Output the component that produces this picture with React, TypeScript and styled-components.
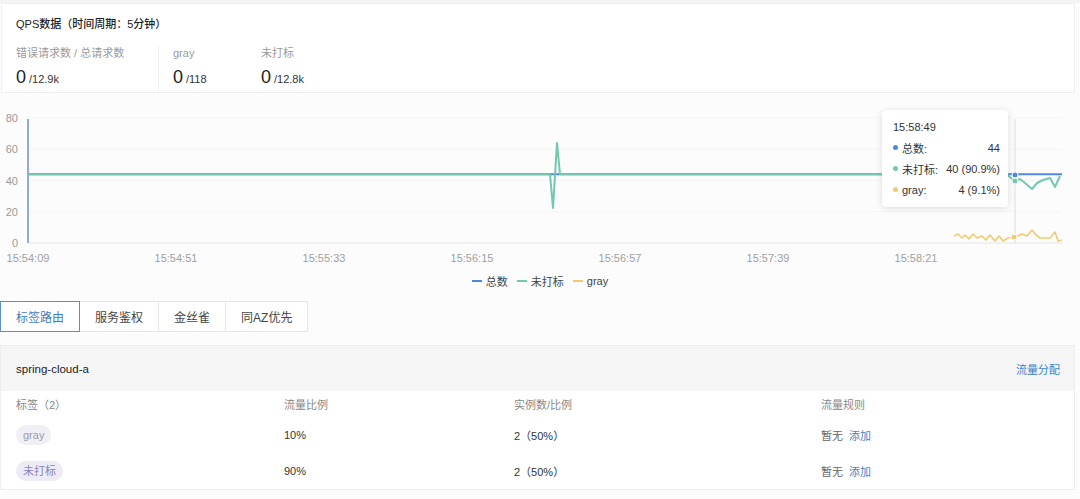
import React from "react";
import styled, { createGlobalStyle } from "styled-components";

const Global = createGlobalStyle`
  html, body { margin: 0; padding: 0; background: #fcfcfd; }
  body { font-family: "Liberation Sans", "Noto Sans CJK SC", sans-serif; color: #333; }
  * { box-sizing: border-box; }
`;

const Page = styled.div`
  width: 1080px;
  height: 499px;
  display: flex;
  flex-direction: column;
  overflow: hidden;
  border-top: 3px solid #f4f4f5;
`;

const Card = styled.section`
  margin-left: 1px;
  width: 1074px;
  height: 90px;
  background: #fff;
  border: 1px solid #efeff1;
  display: flex;
  flex-direction: column;
  padding: 13px 0 0 0;
`;

const Title = styled.div`
  font-size: 11px;
  font-weight: 500;
  color: #222;
  padding-left: 14px;
  line-height: 14px;
`;

const Stats = styled.div`
  display: flex;
  margin-top: 15px;
  flex: 1;
`;

const Stat = styled.div<{ $w?: number; $divider?: boolean }>`
  width: ${(p) => (p.$w ? `${p.$w}px` : "auto")};
  padding-left: 14px;
  border-right: ${(p) => (p.$divider ? "1px solid #f0f0f2" : "none")};
  display: flex;
  flex-direction: column;
`;

const StatLabel = styled.div`
  font-size: 11px;
  color: #9a9a9a;
  line-height: 14px;
`;

const StatValue = styled.div`
  margin-top: 7px;
  display: flex;
  align-items: baseline;
  font-size: 18px;
  color: #222;
  line-height: 20px;
  small {
    font-size: 11px;
    margin-left: 3px;
    color: #333;
  }
`;

const ChartWrap = styled.div`
  position: relative;
  height: 168px;
  margin-top: 7px;
`;

const ChartSvg = styled.svg`
  display: block;
  width: 1080px;
  height: 168px;
`;

const Tooltip = styled.div`
  position: absolute;
  left: 882px;
  top: 10px;
  width: 126px;
  height: 97px;
  background: #fff;
  border-radius: 4px;
  box-shadow: 0 1px 7px rgba(0, 0, 0, 0.13);
  padding: 10px 8px 0 11px;
  font-size: 11px;
  color: #333;
`;

const TipTime = styled.div`
  line-height: 14px;
  margin-bottom: 3px;
`;

const TipRow = styled.div`
  display: flex;
  align-items: center;
  height: 21px;
  span:last-child {
    margin-left: auto;
  }
`;

const Dot = styled.i<{ $c: string }>`
  width: 5px;
  height: 5px;
  border-radius: 50%;
  background: ${(p) => p.$c};
  margin-right: 4px;
  display: inline-block;
`;

const Legend = styled.div`
  display: flex;
  justify-content: center;
  gap: 9px;
  height: 26px;
  align-items: center;
  font-size: 11px;
  color: #444;
`;

const LegendItem = styled.div<{ $c: string }>`
  display: flex;
  align-items: center;
  &::before {
    content: "";
    width: 10px;
    height: 2px;
    background: ${(p) => p.$c};
    margin-right: 4px;
  }
`;

const Tabs = styled.div`
  display: flex;
  margin-top: 7px;
  height: 31px;
`;

const Tab = styled.div<{ $active?: boolean }>`
  padding: 0 15px;
  display: flex;
  align-items: center;
  font-size: 12px;
  color: ${(p) => (p.$active ? "#3f7cc0" : "#444")};
  background: #fff;
  border: 1px solid ${(p) => (p.$active ? "#5d8fc9" : "#e6e6e8")};
  margin-left: -1px;
  position: relative;
  z-index: ${(p) => (p.$active ? 1 : 0)};
  &:first-child { margin-left: 0; }
`;

const Table = styled.section`
  margin-top: 13px;
  width: 1075px;
  background: #fff;
  border: 1px solid #eeeef0;
  display: flex;
  flex-direction: column;
`;

const TableHead = styled.div`
  height: 45px;
  background: #f5f5f6;
  display: flex;
  align-items: center;
  justify-content: space-between;
  padding: 0 14px 0 15px;
  font-size: 11.5px;
  color: #222;
`;

const Link = styled.span`
  color: #3f7fc6;
  font-size: 11px;
`;

const Row = styled.div<{ $h: number; $head?: boolean }>`
  display: grid;
  grid-template-columns: 268px 230px 307px 1fr;
  align-items: center;
  height: ${(p) => p.$h}px;
  padding-left: 15px;
  font-size: 11px;
  color: ${(p) => (p.$head ? "#888" : "#333")};
`;

const Pill = styled.span<{ $purple?: boolean }>`
  justify-self: start;
  height: 20px;
  line-height: 20px;
  padding: 0 7px;
  border-radius: 10px;
  background: ${(p) => (p.$purple ? "#ecebf6" : "#f0f0f4")};
  color: ${(p) => (p.$purple ? "#8a84b6" : "#9a9aa2")};
`;

const Rule = styled.span`
  display: flex;
  gap: 6px;
  color: #666;
`;

const BLUE = "#4f88e0";
const GREEN = "#72c8b0";
const YELLOW = "#f1cb6e";

const yOf = (v: number) => 143 - v * 1.5625;

const greenPath =
  `M28,${yOf(44)} H550 L553,108 L557,43 L560,${yOf(44)} H1004 L1008,75.5 L1011,78 L1015,81 L1020,79 L1025,83 L1032,89 L1037,83 L1043,80 L1050,78 L1055,87 L1060,76`;

const yellowPts = [
  [954, 136], [958, 134], [962, 138], [965, 135], [969, 139], [973, 134], [977, 138], [982, 136],
  [986, 140], [990, 135], [995, 141], [999, 136], [1003, 141], [1008, 138], [1014, 137], [1018, 136],
  [1022, 134], [1027, 136], [1032, 130], [1036, 135], [1040, 138], [1047, 138], [1050, 138],
  [1055, 132], [1058, 141], [1062, 140],
];

const xLabels = ["15:54:09", "15:54:51", "15:55:33", "15:56:15", "15:56:57", "15:57:39", "15:58:21"];
const yLabels = [80, 60, 40, 20, 0];

function Chart() {
  return (
    <ChartWrap>
      <ChartSvg viewBox="0 0 1080 168">
        {yLabels.map((v) => (
          <g key={v}>
            <line x1={28} x2={1062} y1={yOf(v)} y2={yOf(v)} stroke={v === 0 ? "#e6e6e8" : "#f5f5f6"} strokeWidth={1} />
            <text x={18} y={yOf(v) + 4} textAnchor="end" fontSize={11} fill="#9a9a9a" fontFamily="Liberation Sans, sans-serif">
              {v}
            </text>
          </g>
        ))}
        {xLabels.map((t, i) => (
          <text key={t} x={28 + i * 148} y={162} textAnchor="middle" fontSize={11} fill="#a0a0a0" fontFamily="Liberation Sans, sans-serif">
            {t}
          </text>
        ))}
        <line x1={28} x2={28} y1={19} y2={143} stroke="#6f93c4" strokeWidth={1.5} />
        <line x1={1015} x2={1015} y1={19} y2={143} stroke="#dcdcdc" strokeWidth={1} />
        <path d={`M28,${yOf(44)} H1062`} stroke={BLUE} strokeWidth={2} fill="none" />
        <path d={greenPath} stroke={GREEN} strokeWidth={2} fill="none" strokeLinejoin="round" />
        <polyline points={yellowPts.map((p) => p.join(",")).join(" ")} stroke={YELLOW} strokeWidth={1.6} fill="none" strokeLinejoin="round" />
        <circle cx={1015} cy={75} r={3} fill={BLUE} stroke="#fff" strokeWidth={1} />
        <circle cx={1015} cy={81} r={3} fill={GREEN} stroke="#fff" strokeWidth={1} />
        <circle cx={1014} cy={137} r={3} fill={YELLOW} stroke="#fff" strokeWidth={1} />
      </ChartSvg>
      <Tooltip>
        <TipTime>15:58:49</TipTime>
        <TipRow>
          <Dot $c={BLUE} />
          <span>总数:</span>
          <span>44</span>
        </TipRow>
        <TipRow>
          <Dot $c={GREEN} />
          <span>未打标:</span>
          <span>40 (90.9%)</span>
        </TipRow>
        <TipRow>
          <Dot $c={YELLOW} />
          <span>gray:</span>
          <span>4 (9.1%)</span>
        </TipRow>
      </Tooltip>
    </ChartWrap>
  );
}

export default function App() {
  return (
    <>
      <Global />
      <Page>
        <Card>
          <Title>QPS数据（时间周期：5分钟）</Title>
          <Stats>
            <Stat $w={157} $divider>
              <StatLabel>错误请求数 / 总请求数</StatLabel>
              <StatValue>0<small>/12.9k</small></StatValue>
            </Stat>
            <Stat $w={88}>
              <StatLabel>gray</StatLabel>
              <StatValue>0<small>/118</small></StatValue>
            </Stat>
            <Stat>
              <StatLabel>未打标</StatLabel>
              <StatValue>0<small>/12.8k</small></StatValue>
            </Stat>
          </Stats>
        </Card>
        <Chart />
        <Legend>
          <LegendItem $c={BLUE}>总数</LegendItem>
          <LegendItem $c={GREEN}>未打标</LegendItem>
          <LegendItem $c={YELLOW}>gray</LegendItem>
        </Legend>
        <Tabs>
          <Tab $active>标签路由</Tab>
          <Tab>服务鉴权</Tab>
          <Tab>金丝雀</Tab>
          <Tab>同AZ优先</Tab>
        </Tabs>
        <Table>
          <TableHead>
            <span>spring-cloud-a</span>
            <Link>流量分配</Link>
          </TableHead>
          <Row $h={26} $head>
            <span>标签（2）</span>
            <span>流量比例</span>
            <span>实例数/比例</span>
            <span>流量规则</span>
          </Row>
          <Row $h={36}>
            <Pill>gray</Pill>
            <span>10%</span>
            <span>2（50%）</span>
            <Rule>暂无<Link>添加</Link></Rule>
          </Row>
          <Row $h={36}>
            <Pill $purple>未打标</Pill>
            <span>90%</span>
            <span>2（50%）</span>
            <Rule>暂无<Link>添加</Link></Rule>
          </Row>
        </Table>
      </Page>
    </>
  );
}
